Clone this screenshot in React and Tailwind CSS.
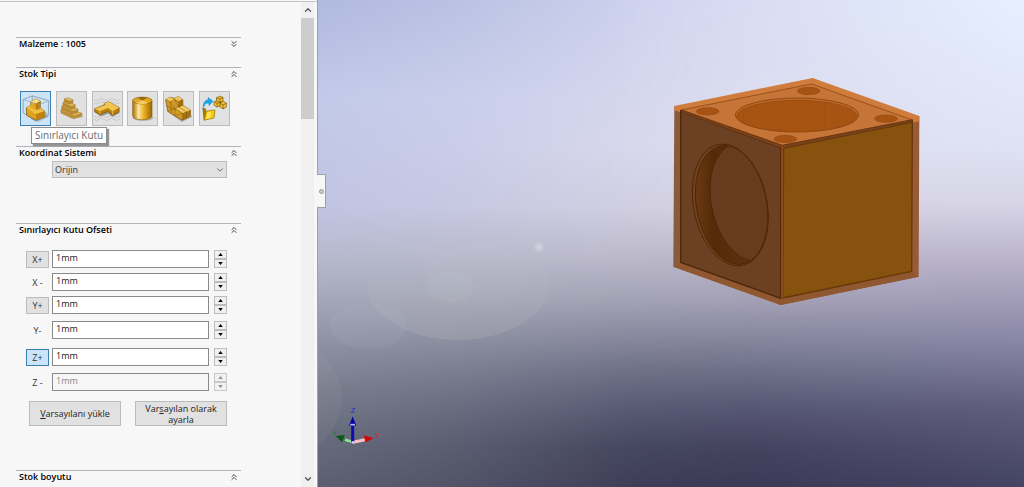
import { useState } from 'react';
import { ChevronDown, ChevronUp, ChevronsDown, ChevronsUp } from 'lucide-react';

const EDGE = '#6b4a08';

function BoundingBoxIcon() {
  return (
    <svg viewBox="0 0 93 105" className="w-full h-full" strokeLinejoin="round">
      <path d="M30 86 54 96 88 80 82 64Z" fill="#5c6f7e" opacity=".35" />
      <path d="M7 24 36 12 88 27M36 12V30M7 24V66L46 92M88 27V74L46 92" fill="none" stroke="#7f93a3" strokeWidth="2.5" />
      <path d="M17 50 31 43 31 31 48 22 62 29 62 50 76 61 76 80 48 90 18 74Z" fill="#e0a31d" stroke={EDGE} strokeWidth="2" />
      <path d="M17 50 31 43 41 48 48 57 62 50 76 61 48 70Z" fill="#efc044" />
      <path d="M31 31 48 22 62 29 46 37Z" fill="#ffe183" />
      <path d="M46 37 62 29 62 50 48 58Z" fill="#b57c0d" />
      <path d="M31 31 46 37 48 58 31 49Z" fill="#e2a725" />
      <path d="M48 70 76 61 76 80 48 90Z" fill="#bd830f" />
      <path d="M7 24 60 40 88 27M60 40V60" fill="none" stroke="#8ba0b0" strokeWidth="2" />
    </svg>
  );
}

function ExtrudedIcon() {
  return (
    <svg viewBox="0 0 93 105" className="w-full h-full" strokeLinejoin="round">
      <path d="M40 84 80 82 84 76 76 66Z" fill="#888" opacity=".35" />
      <g stroke="#9b7a35" strokeWidth="1">
        <path d="M12 57 26 49 80 68 79 77 54 86 13 68Z" fill="#bd9038" />
        <path d="M12 57 26 49 80 68 55 76Z" fill="#dfb95e" />
        <path d="M15 45 28 38 68 55 67 65 49 71 15 56Z" fill="#b98a2f" />
        <path d="M15 45 28 38 68 55 50 61Z" fill="#dfb95e" />
        <path d="M19 33 31 28 59 41 58 52 45 56 19 44Z" fill="#b98a2f" />
        <path d="M19 33 31 28 59 41 46 46Z" fill="#dfb95e" />
        <path d="M23 22 34 18 52 25 51 35 41 39 23 32Z" fill="#b98a2f" />
        <path d="M23 22 34 18 52 25 42 29Z" fill="#e6c36d" />
      </g>
    </svg>
  );
}

function SketchIcon() {
  return (
    <svg viewBox="0 0 93 105" className="w-full h-full" strokeLinejoin="round">
      <path
        d="M4 24Q12 32 20 24T36 24T52 24T68 24T86 24M4 34Q12 42 20 34T36 34T52 34T68 34T86 34M4 77Q12 85 20 77T36 77T52 77T68 77T86 77M4 87Q12 95 20 87T36 87T52 87T68 87T86 87"
        fill="none"
        stroke="#b3b7ba"
        strokeWidth="2"
      />
      <path d="M8 64 24 78 50 69 62 80 86 67 80 53Z" fill="#5b5542" opacity=".5" />
      <path d="M5 53 36 41 36 36 50 31 84 49 84 62 63 74 48 62 22 72 6 64Z" fill="#b87e0e" stroke={EDGE} strokeWidth="2" />
      <path d="M5 53 40 41 36 36 50 31 84 49 63 61 48 51 22 61Z" fill="#f0c44f" />
      <path d="M22 61V71M63 61V73" stroke="#fbdc83" strokeWidth="2" />
    </svg>
  );
}

function CylinderIcon() {
  return (
    <svg viewBox="0 0 93 105" className="w-full h-full">
      <defs>
        <linearGradient id="cylinder">
          <stop offset="0" stopColor="#a66c05" />
          <stop offset=".3" stopColor="#ffe69a" />
          <stop offset=".6" stopColor="#e6ac22" />
          <stop offset="1" stopColor="#9b6404" />
        </linearGradient>
      </defs>
      <ellipse cx="48" cy="82" rx="34" ry="10" fill="#777" opacity=".4" />
      <path d="M15 26V76C17 93 75 93 77 76V26Z" fill="url(#cylinder)" stroke="#8a5c08" strokeWidth="2" />
      <ellipse cx="46" cy="27" rx="31" ry="11" fill="#e0a725" stroke="#8a5c08" strokeWidth="2" />
      <path d="M46 27 30 18Q46 13 62 18Z" fill="#9f6808" />
      <path d="M46 27 24 34Q46 41 66 35Z" fill="#f5ce62" />
    </svg>
  );
}

function MeshIcon() {
  return (
    <svg viewBox="0 0 93 105" className="w-full h-full" strokeLinejoin="round">
      <path d="M10 60 56 96 90 80 84 68Z" fill="#666" opacity=".4" />
      <path d="M5 24 20 16 33 20 46 14 60 24 61 42 85 58 84 78 59 90 34 76 12 62Z" fill="#d09a24" stroke={EDGE} strokeWidth="2" />
      <path d="M5 24 20 16 34 24 20 31ZM33 20 46 14 60 24 47 30ZM36 52 61 42 85 58 59 68Z" fill="#f0c860" />
      <path d="M59 68 85 58 84 78 59 90ZM47 30 60 24 61 42 47 48Z" fill="#a87312" />
      <path
        d="M5 24 20 31 34 24M20 31 24 69M8 44 36 56 20 31M34 24 47 30 60 24M47 30V48L34 24M36 52 34 76 59 68 36 52 61 42M59 68V90L84 60M36 52 12 62M47 48 72 63V84M47 48 60 24"
        fill="none"
        stroke="#84590a"
        strokeWidth="1.5"
      />
    </svg>
  );
}

function FromFileIcon() {
  return (
    <svg viewBox="0 0 93 105" className="w-full h-full" strokeLinejoin="round">
      <path d="M10 46C11 31 18 25 27 25L26 17 42 29 29 43 28 35C20 34 15 37 13 46Z" fill="#14a9ea" stroke="#0b83ba" strokeWidth="1.5" />
      <path d="M9 50 18 54 19 82 13 90Z" fill="#a87705" stroke={EDGE} strokeWidth="1.5" />
      <path d="M20 61 48 57 45 83 13 90Z" fill="#f7c90b" stroke="#8d6800" strokeWidth="2" />
      <path d="M24 65 36 63 33 83 20 86Z" fill="#ffe65a" />
      <g fill="#f2c230" stroke={EDGE} strokeWidth="2">
        <path d="M45 31 56 26 66 32 65 43 55 48 45 42Z" />
        <path d="M53 18 63 13 74 17 74 28 64 33 53 28Z" />
        <path d="M64 36 75 30 85 36 84 48 74 54 64 48Z" />
        <path d="M45 31 55 36 66 32M55 36V48M53 18 64 22 74 17M64 22V33M64 36 74 41 85 36M74 41V54" fill="none" />
      </g>
    </svg>
  );
}

const stockTypes = [
  { name: 'Sınırlayıcı Kutu', Icon: BoundingBoxIcon },
  { name: 'Ekstrüzyon', Icon: ExtrudedIcon },
  { name: 'Çizim', Icon: SketchIcon },
  { name: 'Silindir', Icon: CylinderIcon },
  { name: 'STL', Icon: MeshIcon },
  { name: 'Parça dosyası', Icon: FromFileIcon },
];

function Section({ title, collapsed, className = '', children }) {
  const Icon = collapsed ? ChevronsDown : ChevronsUp;
  return (
    <section className={`border-t border-[#b2b2bc] ${className}`}>
      <div className="flex items-center justify-between h-[12px] mb-[2px] pl-[3px] pr-[2px]">
        <h2 className="text-[9px] leading-[12px] font-semibold text-black">{title}</h2>
        <button aria-label={title} aria-expanded={!collapsed} className="text-[#222]">
          <Icon className="w-[10px] h-[10px]" strokeWidth={2} />
        </button>
      </div>
      {children}
    </section>
  );
}

function Spinner({ disabled }) {
  const box = 'flex items-center justify-center w-full flex-1 border border-[#bdbdbd] bg-[#f0f0f0]';
  return (
    <div className={`flex flex-col w-[13px] h-[18px] ml-[5px] ${disabled ? 'text-[#777] opacity-80' : 'text-black'}`}>
      <button className={box} disabled={disabled} aria-label="Artır">
        <svg viewBox="0 0 6 4" className="w-[5px] h-[3px]"><path d="M0 4 3 0 6 4Z" fill="currentColor" /></svg>
      </button>
      <button className={box} disabled={disabled} aria-label="Azalt">
        <svg viewBox="0 0 6 4" className="w-[5px] h-[3px]"><path d="M0 0 3 4 6 0Z" fill="currentColor" /></svg>
      </button>
    </div>
  );
}

const labelStyles = {
  plain: 'border-transparent',
  raised: 'border-[#bcbcbc] bg-[#e1e1e1]',
  active: 'border-[#3c7fb1] bg-[#cce4f7]',
};

function OffsetRow({ label, kind = 'plain', disabled }) {
  const [value, setValue] = useState('1mm');
  return (
    <div className="flex items-end h-[18px]">
      <button className={`w-[23px] h-[17px] mr-[3px] border text-[9px] leading-[15px] text-[#333] ${labelStyles[kind]}`}>
        {label}
      </button>
      <input
        aria-label={label}
        value={value}
        disabled={disabled}
        onChange={(e) => setValue(e.target.value)}
        className="flex-1 min-w-0 h-[18px] px-[3px] pb-[3px] border border-[#8a8a8a] bg-white text-[9px] text-[#222] disabled:bg-[#f7f7f7] disabled:text-[#888]"
      />
      <Spinner disabled={disabled} />
    </div>
  );
}

function PropertyPanel() {
  return (
    <div className="flex-1 min-w-0 pl-4 pr-[60px] pt-[35px]">
      <Section title="Malzeme : 1005" collapsed className="h-[30px]" />

      <Section title="Stok Tipi" className="h-[79px]">
        <div className="relative flex justify-between pl-1 pr-[11px] pt-[9px]">
          {stockTypes.map(({ name, Icon }, i) => (
            <button
              key={name}
              aria-label={name}
              className={`w-[31px] h-[35px] shrink-0 border ${i === 0 ? 'border-[#3c7fb1] bg-[#cce4f7]' : 'border-[#bcbcbc] bg-[#e1e1e1]'}`}
            >
              <Icon />
            </button>
          ))}
          <div
            role="tooltip"
            className="absolute left-[15px] top-[45px] z-10 h-[17px] px-[3px] border border-[#8c8c8c] bg-white text-[10px] leading-[15px] text-[#6b6b6b] whitespace-nowrap shadow-[2px_2px_1px_#00000066]"
          >
            Sınırlayıcı Kutu
          </div>
        </div>
      </Section>

      <Section title="Koordinat Sistemi" className="h-[77px]">
        <div className="relative mt-[2px] ml-9 mr-[14px]">
          <select
            aria-label="Koordinat Sistemi"
            className="block w-full h-[17px] pl-[2px] appearance-none border border-[#bcbcbc] bg-[#e1e1e1] text-[9px] leading-[15px] text-[#333]"
          >
            <option>Orijin</option>
          </select>
          <ChevronDown className="absolute right-[2px] top-[4px] w-[10px] h-[10px] text-[#555] pointer-events-none" />
        </div>
      </Section>

      <Section title="Sınırlayıcı Kutu Ofseti" className="h-[247px]">
        <div className="pl-[10px] pr-[14px] pt-3">
          <div className="flex flex-col gap-[5px]">
            <OffsetRow label="X+" kind="raised" />
            <OffsetRow label="X -" />
          </div>
          <div className="flex flex-col gap-[7px] mt-[5px]">
            <OffsetRow label="Y+" kind="raised" />
            <OffsetRow label="Y-" />
          </div>
          <div className="flex flex-col gap-[7px] mt-[9px]">
            <OffsetRow label="Z+" kind="active" />
            <OffsetRow label="Z -" disabled />
          </div>
          <div className="flex gap-[14px] mt-[10px] pl-[3px] text-[9px] leading-[11px] text-[#222]">
            <button className="flex-1 h-[25px] border border-[#bcbcbc] bg-[#e1e1e1]">
              <u>V</u>arsayılanı yükle
            </button>
            <button className="flex-1 h-[25px] border border-[#bcbcbc] bg-[#e1e1e1]">
              Var<u>s</u>ayılan olarak ayarla
            </button>
          </div>
        </div>
      </Section>

      <Section title="Stok boyutu" />
    </div>
  );
}

function Scrollbar() {
  return (
    <div className="flex flex-col w-[13px] mr-[3px] bg-[#f0f0f0] text-[#555]">
      <button aria-label="Yukarı kaydır" className="flex justify-center items-center h-4">
        <ChevronUp className="w-[10px] h-[10px]" strokeWidth={3} />
      </button>
      <div className="h-[101px] bg-[#cdcdcd]" />
      <button aria-label="Aşağı kaydır" className="flex justify-center items-center h-4 mt-auto">
        <ChevronDown className="w-[10px] h-[10px]" strokeWidth={3} />
      </button>
    </div>
  );
}

function Backdrop() {
  return (
    <g>
      <defs>
        <linearGradient id="skyMid" x2="0" y2="1">
          <stop offset="0" stopColor="#d4d6f0" />
          <stop offset=".3" stopColor="#dddcee" />
          <stop offset=".43" stopColor="#d4d1e1" />
          <stop offset=".52" stopColor="#c0bccd" />
          <stop offset=".62" stopColor="#a3a1b4" />
          <stop offset=".68" stopColor="#8b8ba1" />
          <stop offset=".76" stopColor="#6c6e85" />
          <stop offset=".84" stopColor="#535470" />
          <stop offset=".92" stopColor="#3f3f5a" />
          <stop offset="1" stopColor="#383752" />
        </linearGradient>
        <linearGradient id="skyLeft" x2="0" y2="1">
          <stop offset="0" stopColor="#afb9de" />
          <stop offset=".2" stopColor="#c2c9e9" />
          <stop offset=".42" stopColor="#c1c4e2" />
          <stop offset=".52" stopColor="#b7bace" />
          <stop offset=".6" stopColor="#a7abbc" />
          <stop offset=".7" stopColor="#8f92a3" />
          <stop offset=".8" stopColor="#787d8d" />
          <stop offset=".9" stopColor="#676c7c" />
          <stop offset="1" stopColor="#5c5f70" />
        </linearGradient>
        <linearGradient id="skyRight" x2="0" y2="1">
          <stop offset="0" stopColor="#e7effe" />
          <stop offset=".3" stopColor="#dee2f3" />
          <stop offset=".42" stopColor="#d6d4e6" />
          <stop offset=".52" stopColor="#bcb6cd" />
          <stop offset=".64" stopColor="#9b96b3" />
          <stop offset=".72" stopColor="#8282a0" />
          <stop offset=".84" stopColor="#5e5e7b" />
          <stop offset="1" stopColor="#444463" />
        </linearGradient>
        <linearGradient id="fadeLeft">
          <stop offset="0" stopColor="#fff" />
          <stop offset=".2" stopColor="#b4b4b4" />
          <stop offset=".45" stopColor="#2c2c2c" />
          <stop offset=".62" stopColor="#000" />
        </linearGradient>
        <linearGradient id="fadeRight">
          <stop offset=".4" stopColor="#000" />
          <stop offset=".65" stopColor="#555" />
          <stop offset="1" stopColor="#fff" />
        </linearGradient>
        <mask id="maskLeft"><rect x="318" width="706" height="487" fill="url(#fadeLeft)" /></mask>
        <mask id="maskRight"><rect x="318" width="706" height="487" fill="url(#fadeRight)" /></mask>
        <linearGradient id="disc" x2="0" y2="1">
          <stop offset=".2" stopColor="#d0d2c8" stopOpacity="0" />
          <stop offset="1" stopColor="#d0d2c8" stopOpacity=".16" />
        </linearGradient>
        <radialGradient id="glint">
          <stop offset="0" stopColor="#fff" stopOpacity=".35" />
          <stop offset="1" stopColor="#fff" stopOpacity="0" />
        </radialGradient>
      </defs>
      <rect x="318" width="706" height="487" fill="url(#skyMid)" />
      <rect x="318" width="706" height="487" fill="url(#skyLeft)" mask="url(#maskLeft)" />
      <rect x="318" width="706" height="487" fill="url(#skyRight)" mask="url(#maskRight)" />
      {/* lens flare discs */}
      <g fill="#d9dcd4">
        <ellipse cx="458" cy="284" rx="91" ry="56" fill="url(#disc)" />
        <ellipse cx="477" cy="276" rx="51" ry="31" opacity=".03" />
        <ellipse cx="450" cy="287" rx="24" ry="16" opacity=".07" />
        <ellipse cx="368" cy="326" rx="38" ry="23" fill="#b4c0dc" opacity=".1" />
        <circle cx="285" cy="398" r="57" opacity=".05" />
      </g>
      <circle cx="539" cy="247" r="6" fill="url(#glint)" />
    </g>
  );
}

function StockBlock() {
  return (
    <g transform="translate(660 70) scale(0.33333)" strokeLinejoin="round">
      <defs>
        <clipPath id="sideBore">
          <circle r="1" transform="matrix(107 35 0 174 214 405)" />
        </clipPath>
        <linearGradient id="boreWall">
          <stop offset="0" stopColor="#6a3a14" />
          <stop offset=".25" stopColor="#552a08" />
          <stop offset="1" stopColor="#603616" />
        </linearGradient>
      </defs>

      {/* transparent stock around the part */}
      <path d="M43 108 362 215V705L40 590Z" fill="#8b5a38" />
      <path d="M778 138 362 215V705L776 620Z" fill="#985b36" />
      <path d="M40 590 62 577 362 685 755 604 776 620 362 705Z" fill="#8f5830" />
      <path d="M43 108 458 24 778 138V154L366 234 43 121Z" fill="#d07c3c" />

      <path d="M64 120 455 42 757 150 368 226Z" fill="#c67538" stroke="#9a5018" strokeWidth="3" />
      <path d="M62 122 362 232V685L62 577Z" fill="#6b4023" stroke="#4c2708" strokeWidth="4" />
      <path d="M371 232 757 152 755 604 368 684Z" fill="#87510e" stroke="#663708" strokeWidth="4" />
      <path d="M64 120 367 226 757 149 757 157 367 236 64 127Z" fill="#7a421a" stroke="#5b2e0c" strokeWidth="2" />
      <path d="M366 230V685" stroke="#8f4c1d" strokeWidth="7" />
      <path d="M362 230V685" stroke="#552a0a" strokeWidth="2" />

      {/* bore on top with four bolt holes */}
      <ellipse cx="411" cy="135" rx="185" ry="51" fill="#bd6a2b" stroke="#91490f" strokeWidth="3" />
      <ellipse cx="411" cy="138" rx="180" ry="47" fill="#a75412" stroke="#91490f" strokeWidth="2" />
      <path d="M252 116V161M495 97V179" stroke="#9e4f10" strokeWidth="2" />
      <g fill="#a75313" stroke="#944a12" strokeWidth="2">
        <ellipse cx="143" cy="124" rx="34" ry="11" />
        <ellipse cx="446" cy="63" rx="34" ry="11" />
        <ellipse cx="678" cy="146" rx="34" ry="11" />
        <ellipse cx="376" cy="207" rx="34" ry="11" />
      </g>

      {/* bore on the left side */}
      <circle r="1" transform="matrix(114 37 0 179 211 405)" fill="#75421d" stroke="#4c2708" vectorEffect="non-scaling-stroke" className="[stroke-width:1px]" />
      <circle r="1" transform="matrix(109 35 0 175 215 405)" fill="url(#boreWall)" stroke="#4c2708" vectorEffect="non-scaling-stroke" className="[stroke-width:1px]" />
      <g clipPath="url(#sideBore)">
        <circle r="1" transform="matrix(112 37 0 174 262 396)" fill="#683b1e" stroke="#4c2708" vectorEffect="non-scaling-stroke" className="[stroke-width:1px]" />
      </g>
    </g>
  );
}

function Triad() {
  return (
    <g transform="translate(325 395) scale(0.33333)" fontFamily="Liberation Sans, sans-serif" fontSize="22" textAnchor="middle">
      <path d="M84 141 60 134" stroke="#8fe09a" strokeWidth="8" />
      <path d="M34 124 58 121 51 140Z" fill="#075c10" stroke="#075c10" strokeWidth="2" />
      <path d="M84 142 120 134" stroke="#ffc0c0" strokeWidth="9" />
      <path d="M143 130 118 122 122 141Z" fill="#cf0909" stroke="#cf0909" strokeWidth="2" />
      <path d="M83 142V90" stroke="#0b0bb0" strokeWidth="9" />
      <path d="M83 64 72 92H94Z" fill="#0707a0" />
      <path d="M76 89H90" stroke="#b8b8ff" strokeWidth="5" />
      <circle cx="84" cy="142" r="4" fill="#c8d0ff" />
      <text x="84" y="54" fill="#2626dd">Z</text>
      <text x="157" y="129" fill="#d42a3c">X</text>
      <text x="28" y="122" fill="#1f7a2a">Y</text>
    </g>
  );
}

export default function App() {
  return (
    <div className="flex h-screen overflow-hidden bg-[#f7f7f7] font-['Open_Sans','Noto_Sans',sans-serif]">
      <aside className="flex flex-col w-[318px] shrink-0 border-r border-[#a0a0a8]">
        <div className="h-[2px] shrink-0 border-b border-[#c4c4c4]" />
        <div className="flex flex-1 min-h-0">
          <PropertyPanel />
          <Scrollbar />
        </div>
      </aside>

      <main className="relative flex-1 min-w-0">
        <svg viewBox="318 0 706 487" preserveAspectRatio="xMinYMin slice" className="block w-full h-full">
          <Backdrop />
          <StockBlock />
          <Triad />
        </svg>
        <button
          aria-label="Paneli daralt"
          className="absolute -left-px top-[174px] flex items-center justify-center w-[9px] h-[34px] border border-l-0 border-[#a0a0a0] bg-[#f7f7f7]"
        >
          <span className="w-[5px] h-[5px] rounded-full border border-[#999] bg-[#ccc]" />
        </button>
      </main>
    </div>
  );
}
